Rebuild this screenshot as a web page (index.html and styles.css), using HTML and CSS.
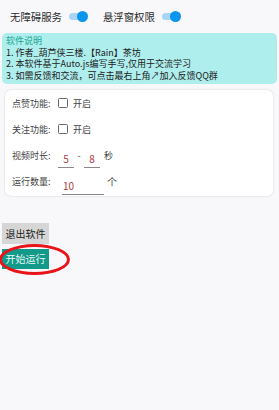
FILE: index.html
```html
<!DOCTYPE html>
<html>
<head>
<meta charset="utf-8">
<link rel="stylesheet" href="styles.css">
</head>
<body>
<div class="page">
  <div class="perms">
    <div class="perm"><span>无障碍服务</span><span class="switch"><span class="track"></span><span class="thumb"></span></span></div>
    <div class="perm"><span>悬浮窗权限</span><span class="switch"><span class="track"></span><span class="thumb"></span></span></div>
  </div>
  <div class="notice">
    <div class="notice-title">软件说明</div>
    <div class="notice-line">1. 作者_葫芦侠三楼.【Rain】茶坊</div>
    <div class="notice-line">2. 本软件基于Auto.js编写手写,仅用于交流学习</div>
    <div class="notice-line">3. 如需反馈和交流，可点击最右上角↗加入反馈QQ群</div>
  </div>
  <div class="card">
    <div class="row"><span class="label">点赞功能:</span><span class="check"></span><span class="txt">开启</span></div>
    <div class="row"><span class="label">关注功能:</span><span class="check"></span><span class="txt">开启</span></div>
    <div class="row"><span class="label">视频时长:</span><span class="input short">5</span><span class="dash">-</span><span class="input short">8</span><span class="txt sec">秒</span></div>
    <div class="row"><span class="label">运行数量:</span><span class="input long">10</span><span class="txt unit">个</span></div>
  </div>
  <div class="buttons">
    <div class="btn exit">退出软件</div>
    <div class="btn start">开始运行<span class="ring"></span></div>
  </div>
</div>
</body>
</html>
```
FILE: styles.css
```css
* { box-sizing: border-box; }
html, body { margin: 0; padding: 0; }
body {
  width: 279px;
  height: 410px;
  background: #f8f8fa;
  font-family: "Noto Sans CJK SC", "Noto Sans", sans-serif;
  color: #333;
  overflow: hidden;
}
.page { display: flex; flex-direction: column; }
.perms {
  display: flex;
  align-items: center;
  height: 32px;
  padding: 0 0 0 10px;
  gap: 15px;
}
.perm { display: flex; align-items: center; gap: 7px; font-size: 10.4px; color: #2a2a2a; }
.switch { position: relative; width: 19px; height: 11px; display: inline-block; }
.switch .track {
  position: absolute; left: 0; top: 2px; width: 16px; height: 7px;
  border-radius: 4px; background: #a9d5f3;
}
.switch .thumb {
  position: absolute; left: 8px; top: 0; width: 11px; height: 11px;
  border-radius: 50%; background: #0b95ec;
}
.notice {
  margin: 1px 2px 0 2px;
  height: 51px;
  background: #aeeeec;
  border-radius: 5px;
  padding: 2px 4px;
  font-size: 9px;
  line-height: 11.5px;
  color: #222;
}
.notice-title { color: #1ba593; }
.card {
  margin: 6px 6px 0 5px;
  background: #fff;
  border-radius: 6px;
  box-shadow: 0 0 2px rgba(0,0,0,0.18);
  padding: 0 0 0 7px;
  height: 106px;
}
.row {
  display: flex;
  align-items: center;
  height: 26px;
  font-size: 9px;
  color: #444;
}
.label { width: 46px; }
.check {
  width: 10px; height: 10px;
  border: 1.3px solid #666;
  border-radius: 1.5px;
  margin-right: 5px;
}
.input {
  display: inline-block;
  border-bottom: 1px solid #888;
  color: #b03a3a;
  height: 17px;
  line-height: 16px;
  font-size: 10px;
  margin-top: 8px;
}
.input.short { width: 16px; text-align: center; }
.input.long { width: 42px; padding-left: 1px; margin-left: 4px; margin-top: 9px; height: 19px; line-height: 20px;}
.dash { width: 10px; text-align: center; }
.txt { margin-left: 0; }
.sec { margin-left: 4px; }
.unit { margin-left: 3px; font-size: 10px; }
.buttons {
  display: flex;
  flex-direction: column;
  align-items: flex-start;
  padding-left: 2px;
  margin-top: 27px;
  gap: 5px;
}
.btn {
  position: relative;
  width: 47px;
  height: 21px;
  line-height: 21px;
  text-align: center;
  font-size: 10px;
}
.exit { background: #d6d6d6; color: #222; }
.start { background: #11998a; color: #e8f8f4; height: 20px; line-height: 20px; }
.ring {
  position: absolute;
  left: -3px; top: -5px;
  width: 71px; height: 31px;
  border: 3.5px solid #e8141a;
  border-radius: 50%;
}
```
